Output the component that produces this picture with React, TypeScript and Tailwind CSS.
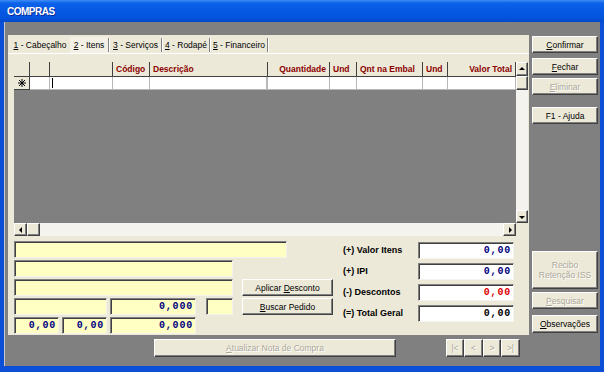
import clsx from "clsx";
import type { ReactNode } from "react";

function Btn({
  children,
  className,
  disabled,
}: {
  children: ReactNode;
  className?: string;
  disabled?: boolean;
}) {
  return (
    <div
      className={clsx(
        "flex items-center justify-center bg-[#ece9d8] border border-t-white border-l-white border-r-[#404040] border-b-[#404040] shadow-[inset_-1px_-1px_0_#808080] text-[8.5px] leading-[10px] text-center",
        disabled ? "text-[#aca899] [text-shadow:1px_1px_0_#ffffff]" : "text-black",
        className
      )}
    >
      {children}
    </div>
  );
}

function Field({
  className,
  value,
  color = "text-[#000080]",
  white,
}: {
  className?: string;
  value?: string;
  color?: string;
  white?: boolean;
}) {
  return (
    <div
      className={clsx(
        "h-[17px] flex items-center justify-end pr-[2px] border border-t-[#808080] border-l-[#808080] border-r-[#f4f3ee] border-b-[#f4f3ee] shadow-[inset_1px_1px_0_#404040] font-['Liberation_Mono',monospace] font-bold text-[10px] tracking-[0.8px]",
        white ? "bg-white" : "bg-[#ffffc4]",
        color,
        className
      )}
    >
      {value}
    </div>
  );
}

function Star() {
  return (
    <svg width="8" height="8" viewBox="0 0 8 8" stroke="black" strokeWidth="1">
      <line x1="4" y1="0" x2="4" y2="8" />
      <line x1="0" y1="4" x2="8" y2="4" />
      <line x1="1" y1="1" x2="7" y2="7" />
      <line x1="7" y1="1" x2="1" y2="7" />
    </svg>
  );
}

function Arrow({ dir }: { dir: "up" | "down" | "left" | "right" }) {
  const pts = {
    up: "1,5 4,2 7,5",
    down: "1,3 4,6 7,3",
    left: "5,1 2,4 5,7",
    right: "3,1 6,4 3,7",
  }[dir];
  return (
    <svg width="8" height="8" viewBox="0 0 8 8">
      <polygon points={pts} fill="black" />
    </svg>
  );
}

const cols = [
  { w: "w-[16px]", label: "" },
  { w: "w-[20px]", label: "" },
  { w: "w-[63px]", label: "" },
  { w: "w-[37px]", label: "Código" },
  { w: "w-[118px]", label: "Descrição" },
  { w: "w-[62px]", label: "Quantidade", right: true },
  { w: "w-[27px]", label: "Und" },
  { w: "w-[66px]", label: "Qnt na Embal" },
  { w: "w-[25px]", label: "Und" },
  { w: "w-[68px]", label: "Valor Total", right: true },
];

const raised =
  "bg-[#ece9d8] border border-t-white border-l-white border-r-[#404040] border-b-[#404040] shadow-[inset_-1px_-1px_0_#808080]";

export default function App() {
  return (
    <div className="w-[604px] h-[372px] flex flex-col bg-[#0b4fd8] overflow-hidden font-['Liberation_Sans',Arial,sans-serif]">
      {/* Title bar */}
      <div className="h-[22px] shrink-0 flex items-center pl-[7px] bg-[linear-gradient(180deg,#3f8cf6_0%,#0c63ea_14%,#0659e4_45%,#0354dd_80%,#0248cc_100%)]">
        <span className="text-white font-bold text-[10px] tracking-[-0.5px] [text-shadow:1px_1px_0_#0a2a9a]">
          COMPRAS
        </span>
      </div>

      {/* Body */}
      <div className="flex-1 mx-[4px] mb-[6px] bg-[#808080] flex border-l border-l-[#c8c8c8]">
        {/* Left column */}
        <div className="ml-[3px] mt-[13px] w-[521px] flex flex-col">
          <div className="h-[300px] bg-[#ece9d8] flex flex-col">
            {/* Tabs */}
            <div className="h-[18px] flex items-stretch pl-[2px] pt-[2px] text-[8.5px] text-black">
              <div className="w-[60px] flex items-center justify-center">
                <span>
                  <u>1</u> - Cabeçalho
                </span>
              </div>
              <div className="w-[38px] flex items-center justify-center bg-[#f3f1e6]">
                <span>
                  <u>2</u> - Itens
                </span>
              </div>
              <div className="w-[2px] my-[1px] border-l border-l-[#808080] border-r border-r-white" />
              <div className="w-[51px] flex items-center justify-center">
                <span>
                  <u>3</u> - Serviços
                </span>
              </div>
              <div className="w-[2px] my-[1px] border-l border-l-[#808080] border-r border-r-white" />
              <div className="w-[46px] flex items-center justify-center">
                <span>
                  <u>4</u> - Rodapé
                </span>
              </div>
              <div className="w-[2px] my-[1px] border-l border-l-[#808080] border-r border-r-white" />
              <div className="w-[56px] flex items-center justify-center">
                <span>
                  <u>5</u> - Financeiro
                </span>
              </div>
              <div className="w-[2px] my-[1px] border-l border-l-[#808080] border-r border-r-white" />
            </div>
            <div className="h-px bg-white" />

            {/* Grid */}
            <div className="mt-[8px] ml-[6px] w-[514px] h-[174px] flex flex-col">
              <div className="flex h-[161px]">
                <div className="w-[502px] flex flex-col bg-[#808080]">
                  <div className="flex h-[15px] bg-[#ece9d8]">
                    {cols.map((c, i) => (
                      <div
                        key={i}
                        className={clsx(
                          c.w,
                          "shrink-0 border-r border-b border-r-[#404040] border-b-[#404040] flex items-center px-[3px] text-[8.5px] font-bold text-[#8b0000] whitespace-nowrap overflow-hidden",
                          c.right ? "justify-end" : "justify-start"
                        )}
                      >
                        {c.label}
                      </div>
                    ))}
                  </div>
                  <div className="flex h-[13px]">
                    {cols.map((c, i) => (
                      <div
                        key={i}
                        className={clsx(
                          c.w,
                          "shrink-0 border-r border-b flex items-center",
                          i === 0
                            ? "bg-[#ece9d8] border-r-[#404040] border-b-[#404040] justify-center"
                            : "bg-white border-r-[#b8b8b8] border-b-[#b8b8b8]",
                          i === 4 && "border-r-2"
                        )}
                      >
                        {i === 0 && <Star />}
                        {i === 2 && <div className="ml-[2px] w-px h-[10px] bg-black" />}
                      </div>
                    ))}
                  </div>
                </div>
                {/* Vertical scrollbar */}
                <div className="w-[12px] flex flex-col bg-[#f4f3ee]">
                  <div className={clsx(raised, "h-[14px] flex items-center justify-center")}>
                    <Arrow dir="up" />
                  </div>
                  <div className={clsx(raised, "h-[14px]")} />
                  <div className="flex-1" />
                  <div className={clsx(raised, "h-[13px] flex items-center justify-center")}>
                    <Arrow dir="down" />
                  </div>
                </div>
              </div>
              {/* Horizontal scrollbar */}
              <div className="flex h-[13px]">
                <div className="w-[502px] flex bg-[#f4f3ee]">
                  <div className={clsx(raised, "w-[13px] flex items-center justify-center")}>
                    <Arrow dir="left" />
                  </div>
                  <div className={clsx(raised, "w-[13px]")} />
                  <div className="flex-1" />
                  <div className={clsx(raised, "w-[13px] flex items-center justify-center")}>
                    <Arrow dir="right" />
                  </div>
                </div>
                <div className="w-[12px] bg-[#ece9d8]" />
              </div>
            </div>

            {/* Footer fields */}
            <div className="flex pl-[6px]">
              <div className="w-[319px] flex flex-col pt-[5px]">
                <Field className="w-[273px]" />
                <div className="flex mt-[2px]">
                  <div className="w-[219px] flex flex-col gap-[2px]">
                    <Field className="w-[219px]" />
                    <Field className="w-[219px]" />
                    <div className="flex">
                      <Field className="w-[93px]" />
                      <Field className="w-[86px] ml-[3px]" value="0,000" />
                      <Field className="w-[27px] ml-[10px]" />
                    </div>
                    <div className="flex">
                      <Field className="w-[45px]" value="0,00" />
                      <Field className="w-[45px] ml-[3px]" value="0,00" />
                      <Field className="w-[86px] ml-[3px]" value="0,000" />
                    </div>
                  </div>
                  <div className="ml-[9px] w-[91px] flex flex-col gap-[2px] pt-[19px]">
                    <Btn className="h-[17px]">
                      <span>
                        Aplicar <u>D</u>esconto
                      </span>
                    </Btn>
                    <Btn className="h-[17px]">
                      <span>
                        <u>B</u>uscar Pedido
                      </span>
                    </Btn>
                  </div>
                </div>
              </div>
              <div className="ml-[10px] flex flex-col gap-[4px] pt-[6px]">
                {[
                  { l: "(+) Valor Itens", c: "text-[#000080]" },
                  { l: "(+) IPI", c: "text-[#000080]" },
                  { l: "(-) Descontos", c: "text-[#e00000]" },
                  { l: "(=) Total Geral", c: "text-black" },
                ].map((r) => (
                  <div key={r.l} className="flex items-center h-[17px]">
                    <div className="w-[75px] text-[9px] font-bold text-black">{r.l}</div>
                    <Field className="w-[96px]" value="0,00" color={r.c} white />
                  </div>
                ))}
              </div>
            </div>
          </div>

          {/* Bottom row */}
          <div className="mt-[4px] flex h-[18px]">
            <Btn disabled className="ml-[146px] w-[242px]">
              <span>
                <u>A</u>tualizar Nota de Compra
              </span>
            </Btn>
            <div className="ml-[50px] flex">
              <Btn disabled className="w-[18px]">|&lt;</Btn>
              <Btn disabled className="w-[19px]">&lt;</Btn>
              <Btn disabled className="w-[18px]">&gt;</Btn>
              <Btn disabled className="w-[19px]">&gt;|</Btn>
            </div>
          </div>
        </div>

        {/* Right column */}
        <div className="ml-[3px] w-[66px] flex flex-col">
          <Btn className="mt-[14px] h-[17px]">
            <span>
              <u>C</u>onfirmar
            </span>
          </Btn>
          <Btn className="mt-[5px] h-[17px]">
            <span>
              <u>F</u>echar
            </span>
          </Btn>
          <Btn disabled className="mt-[3px] h-[17px]">
            <span>
              <u>E</u>liminar
            </span>
          </Btn>
          <Btn className="mt-[12px] h-[17px]">F1 - Ajuda</Btn>
          <Btn disabled className="mt-[127px] h-[38px]">
            <span>
              Recibo
              <br />
              Retenção ISS
            </span>
          </Btn>
          <Btn disabled className="mt-[3px] h-[17px]">
            <span>
              <u>P</u>esquisar
            </span>
          </Btn>
          <Btn className="mt-[6px] h-[18px]">
            <span>
              <u>O</u>bservações
            </span>
          </Btn>
        </div>
      </div>
    </div>
  );
}
